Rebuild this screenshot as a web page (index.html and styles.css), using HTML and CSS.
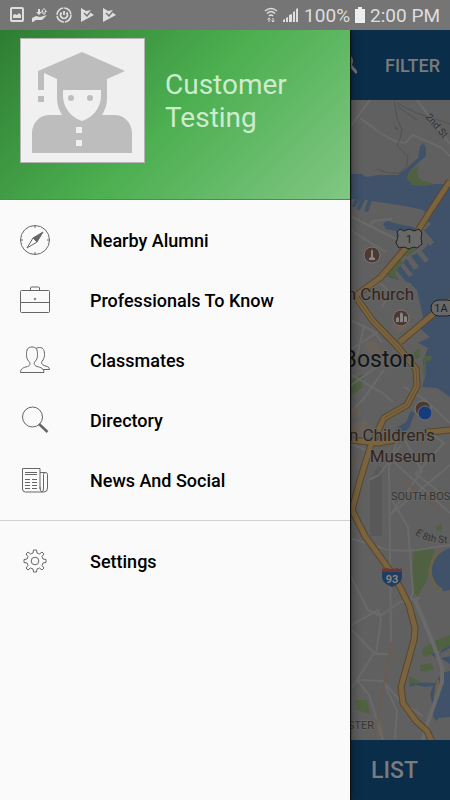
FILE: index.html
```html
<!DOCTYPE html>
<html lang="en">
<head>
    <meta charset="UTF-8">
    <meta name="viewport" content="width=device-width, initial-scale=1.0">
    <title>Nearby Alumni</title>
    <link rel="stylesheet" href="styles.css">
</head>
<body>

<!-- Status Bar -->
<div class="status-bar">
    <div class="status-icons">
        <svg width="14" height="16" viewBox="0 0 14 16"><rect x="1" y="1" width="12" height="13" rx="1" fill="none" stroke="#dedede" stroke-width="2"/><path d="M3 11V8l2-1 2 1 2-2 2 2v3z" fill="#dedede"/></svg>
        <svg width="16" height="16" viewBox="0 0 16 16" fill="#dedede"><path d="M0 11l4-2 4 1 7-2-5 5-6 0-3 2H0zM6 2h2v3h2L7 8 4 5h2z"/><path d="M11 7V4.500H9.500L12 1.500l2.500 3H13V7z" fill="none" stroke="#dedede"/></svg>
        <svg width="16" height="16" viewBox="0 0 16 16" fill="none" stroke="#dedede"><circle cx="8" cy="8" r="7" stroke-width="1.600" stroke-dasharray="10 1"/><path d="M5.500 5.500a3.500 3.500 0 1 0 5 0M8 4v4" stroke-width="1.800"/></svg>
        <svg width="14" height="16" viewBox="0 0 14 16"><path d="M1 1l5 3 5-1v3l3 2L1 15z" fill="#dedede"/><path d="M4 6l3 3 4.500-5.500" fill="none" stroke="#757575" stroke-width="1.500"/></svg>
        <svg width="14" height="16" viewBox="0 0 14 16"><path d="M1 1l5 3 5-1v3l3 2L1 15z" fill="#dedede"/><path d="M4 6l3 3 4.500-5.500" fill="none" stroke="#757575" stroke-width="1.500"/></svg>
    </div>
    <div class="status-info">
        <svg width="14" height="16" viewBox="0 0 14 16" fill="none" stroke="#dedede"><path d="M1 4q6-5 12 0M3 6.500q4-4 8 0M5 9q2-2 4 0" stroke-width="1.400"/><path d="M5 15v-4M3.500 12.500L5 11l1.500 1.500M9 11v4M7.500 13.500L9 15l1.500-1.500"/></svg>
        <svg width="16" height="16" viewBox="0 0 16 16" fill="#dedede"><path d="M0 15v-2l2-1v3zM3 11l2-1v5H3zM6 8l3-1v8H6zM10 5l2-1v11h-2zM13 2l2-1v14h-2z"/></svg>
        <span>100%</span>
        <svg width="10" height="16" viewBox="0 0 10 16" fill="#eeeeee"><path d="M3 0h4v2h3v14H0V2h3z"/></svg>
        <span>2:00 PM</span>
    </div>
</div>

<div class="screen">
    <!-- Map screen behind the drawer -->
    <div class="map-screen">
        <div class="toolbar">
            <button class="search" aria-label="Search">
                <svg width="24" height="24" viewBox="0 0 24 24" fill="none" stroke="#777777" stroke-width="2"><circle cx="13" cy="8" r="6"/><path d="M17 12l7 8" stroke-width="3"/></svg>
            </button>
            <button class="filter">FILTER</button>
        </div>

        <div class="map">
            <svg class="map-art" width="100" height="640" viewBox="350 100 100 640">
                <!-- water -->
                <g fill="#40526a">
                    <path d="M350 174h12l4 3 12-2 20 0 10-8 10-9 2-12 4-3 2 6v7l-9 8-8 8-2 7 6 6 21-1 16 0V397l-13-9-15-1 3-10-2-17 5-12-10-5 12-6-12-10 5-10-6-27-7-7-22-6 20-20 12-5 8-7-6-13 9-8-8-6 9-3-12-6-22-4-26-4-4 11-4-1 4-11-3 0-5 10-4-1 5-10-6 8h-3l3-8H350z"/>
                    <path d="M383 224l4-3 11 3 16 3 2 6-16-1-14-3z"/>
                    <path d="M450 548q-15 5-18 18-2 15 4 22 7 5 14 2zM450 645l-9 5-1 8 10 6zM409 687l7-2 9 2 8-1-3 8 2 9 1 14 3 4 3-3 11-1V671l-8 2-7 10-24-1zM424 650h7l6 5 13-7v8l-12 3z"/>
                    <path d="M411 411l4 2-6 15-5 5-13 3 7-9 8-5zM395 126l4 4-4-1z"/>
                </g>
                <!-- piers -->
                <g fill="#606060">
                    <path d="M388 266l3-3 15 19-3 3zM395 259l3-3 15 19-4 2zM402 252l4-3 13 18-5 3zM409 243l4-3 16 20-4 3zM418 232l4-4 12 14-4 4z"/>
                </g>
                <!-- parks -->
                <g fill="#506142">
                    <path d="M419 165l-9 6-3 7 5 7 10 1 13-2-15-4-3-7z"/>
                    <path d="M382 278l10-16 8-4 3 5-8 9 4 8-9-4zM400 257l13-9 4 1-9 7zM350 380l14-6-2 14-12 8zM414 352l5-4 1 10-6 1zM424 356h8l-1 4-5 1v14l-3-2z"/>
                    <path d="M414 549l13-2 8 3-4 12-4 18-9 16-4-2-2-20zM436 527l6-4v9l-6-2zM423 648l14-8 13-5v11l-12 5-12 6-4-3zM421 665l10-2 3 6-9 3-5-2zM355 700l12 0 3 14-13-4zM409 677l15 6-15 1z"/>
                </g>
                <path d="M441 550q-10 9-11 20 1 15 12 20M438 680l-3 18" fill="none" stroke="#6b6148" stroke-width="3"/>
                <path d="M350 425l17-5 1 14-17 5zM362 342l13-2 12 21-6 8zM350 456l11 6-8 7zM379 720l-3 14 8 3-1-12zM350 408l10-3 2 10-12 3zM390 325l15-7 6 7-13 9z" fill="#69615a"/>
                <path d="M370 480l8-14 4 2v68h-12z" fill="#595959"/>

                <!-- streets -->
                <g fill="none" stroke="#6a6a6a" stroke-width="2">
                    <path d="M350 127l20-27M360 118l23 17 14 7 8 1 8-8 29 13 8 8M417 100l33 44"/>
                    <path d="M350 216l18 9 24 12 20 10M350 230l36 22M369 226l5-5 18-2M365 292l15-9 10 9-8 15M350 320l22 10 10 12M350 350l28-18M350 374l34 20 9 8M364 325l-6 28-8 14M384 370l-20 28-14 15M404 387l20 12 26 24M350 386l28-20M397 440l-7 25"/>
                    <path d="M350 443l45 20 55 50M430 433l14 10-28 31 34 26M450 465l-60 50M402 435l20 36-32 44M369 480l10-5 22-30M389 460l2 182M350 538l38 12 22 1 40-6M389 495l19 32 5 65-3 8"/>
                    <path d="M350 575l18 35 12 6 20-14 20-4M350 626l28-16 3 10-5 34 12 0M350 628l24 25-17 27 26 1 17 20 23 15M383 681l14 30-2 28M357 680l12 15 14 45M350 690l7-10"/>
                </g>
                <path d="M415 600l16 38 11 29v15l-15 43-4 15" fill="none" stroke="#6a6a6a" stroke-width="4"/>
                <path d="M391 642l-10 60-7 36M391 653l16 10M403 480l37 30" fill="none" stroke="#695d51" stroke-width="2"/>
                <path d="M394 100l3 18 5 12-2 9-3 7 11 10-1 9-8 9M377 169l11 4 12 0M397 106l20 14M397 103l20 10 33 11" fill="none" stroke="#525252" stroke-width="1"/>

                <!-- highways -->
                <g fill="none" stroke="#594629" stroke-width="7" stroke-linejoin="round">
                    <path d="M450 181l-21 32-18 29-31 36-25 18 18 25 25 26 18 22 1 17-10 19-23 13-13 27-11 35-8 30 13 26 24 33 12 20 8 16 6 23-1 12-13 47 2 16 13 18 11 10 6 13"/>
                    <path d="M450 300l-50 42M450 430l-20 2-6-1M350 440l28 3 17-3"/>
                </g>
                <g fill="none" stroke="#7a6440" stroke-width="5" stroke-linejoin="round">
                    <path d="M450 181l-21 32-18 29-31 36-25 18 18 25 25 26 18 22 1 17-10 19-23 13-13 27-11 35-8 30 13 26 24 33 12 20 8 16 6 23-1 12-13 47 2 16 13 18 11 10 6 13"/>
                    <path d="M450 300l-50 42M450 430l-20 2-6-1M350 440l28 3 17-3"/>
                </g>
                <path d="M355 296l18 25 25 26 18 22 1 17-10 19-23 13" fill="none" stroke="#655137" stroke-width="1"/>

                <!-- shields and pins -->
                <path d="M400 229l4 2 5-2 5 2 5-2 3 4-1 5 1 6-5 4-4-1-4 2-5-2-5 1-3-5 2-7-1-4z" fill="#686868" stroke="#202020"/>
                <text class="shield-text" x="409" y="243">1</text>
                <rect x="431" y="300" width="24" height="16" rx="8" fill="#686868" stroke="#202020"/>
                <text class="shield-text" x="441" y="312">1A</text>
                <path d="M382 571q10-3 20 0v6q0 6-10 10-10-4-10-10z" fill="#203e60"/>
                <path d="M382 568q3 2 5 0 5 2 10 0 2 2 5 0v4h-20z" fill="#713535"/>
                <text class="shield-text interstate" x="392" y="583">93</text>
                <g stroke="#777777">
                    <circle cx="372" cy="255" r="8" fill="#4c3930"/>
                    <circle cx="401" cy="318" r="8" fill="#4c3930"/>
                    <circle cx="423" cy="409" r="8" fill="#4c3930"/>
                </g>
                <path d="M372 249l1 2 0 6 2 1v2h-6v-2l2-1 0-6zM396 322v-4l2-1 1 1v4zM400 322v-8l1-2 2 2v8zM404 322v-5l1-1 2 1v5z" fill="#858585"/>
                <circle cx="425" cy="413" r="7" fill="#173c7c" stroke="#6e6e6e"/>

                <!-- labels -->
                <text class="place" x="414" y="300">n Church</text>
                <text class="city" x="415" y="367">Boston</text>
                <text class="place" x="435" y="441">Boston Children's</text>
                <text class="place" x="436" y="462">Museum</text>
                <text class="area" x="391" y="500">SOUTH BOS</text>
                <text class="area area-end" x="374" y="729">DORCHESTER</text>
                <text class="street" transform="translate(425 117) rotate(50)">2nd St</text>
                <path id="street-line" d="M415 534q10 9 34 9" fill="none"/>
                <text class="street"><textPath href="#street-line">E 8th St</textPath></text>
            </svg>
        </div>

        <button class="list-button">LIST</button>
    </div>

    <!-- Drawer -->
    <nav class="drawer">
        <div class="profile">
            <svg class="avatar" viewBox="0 0 125 125">
                <path fill="#bdbdbd" d="M18 33L62 14l43 19-18 8v19c0 7-2 12-5 17h13c10 0 17 9 17 18v20H12V95c0-9 7-18 17-18h13c-3-5-5-10-5-17V41l-13-6v17h-6zM18 58h6v6h-6z"/>
                <path fill="#f0f0f0" d="M43 52h38v6c0 12-9 22-19 25-10-3-19-13-19-25zM56 89h6v6h-6zM56 102h6v6h-6z"/>
                <circle cx="51" cy="60" r="3" fill="#bdbdbd"/>
                <circle cx="70" cy="60" r="3" fill="#bdbdbd"/>
            </svg>
            <div class="name">Customer Testing</div>
        </div>

        <div class="menu">
            <a href="#nearby">
                <svg viewBox="0 0 30 30"><circle cx="15" cy="15" r="14.500"/><path d="M15 1v2M15 27v2M1 15h2M27 15h2M7 23l6-10 4 4z"/><path d="M13 13L23 7l-6 10z" fill="#666666"/></svg>
                Nearby Alumni
            </a>
            <a href="#professionals">
                <svg viewBox="0 0 30 30"><rect x="0.500" y="5.500" width="29" height="22" rx="1"/><path d="M10.500 5V3q0-1 1-1h7q1 0 1 1v2M1 17.500h28"/><circle cx="15" cy="14" r="0.800"/></svg>
                Professionals To Know
            </a>
            <a href="#classmates">
                <svg viewBox="0 0 30 30"><path d="M.5 27.500c0-4 3-5 7-6 3-1 3-3 1.500-5-2-2-2.500-4-2.500-7 0-5 1-7.500 5.500-7.500s5.500 2.500 5.500 7.500c0 3-.5 5-2.500 7-1.500 2-1 4 2 5 4 1 7 2 7 6z"/><path d="M16 3.500c1-.7 2-1 3.500-1 4 0 5 3 5 7 0 3-1 5-2.500 7-1 2 0 3 2 4 3 1 5.500 1 5.500 4H23"/></svg>
                Classmates
            </a>
            <a href="#directory">
                <svg viewBox="0 0 30 30"><circle cx="12.500" cy="12" r="10"/><path d="M19 19l8.500 8" stroke-width="2.500"/></svg>
                Directory
            </a>
            <a href="#news">
                <svg viewBox="0 0 30 30"><path d="M20 24V3.500H2.500V24q0 3 3 3H24q3.500 0 3.500-4V9.500q0-2-2-2H20M20 22q0 5 2 5 1.500 0 1.500-4V9.500q0-2 2-2"/><path d="M5 7.500h12M5 9.500h12M5 14.500h5M5 17.500h5M5 20.500h5M5 23.500h5M12 14.500h5M12 17.500h5M12 20.500h5M12 23.500h5"/></svg>
                News And Social
            </a>
        </div>

        <div class="menu">
            <a href="#settings">
                <svg viewBox="0 0 30 30"><circle cx="15" cy="15" r="3.800"/><path d="M13.500 4h3l.5 3 2.500 1 2.500-2 2 2-2 2.500 1 2.500 3 .5v3l-3 .5-1 2.500 2 2.500-2 2-2.500-2-2.500 1-.5 3h-3l-.5-3-2.500-1L8 24l-2-2 2-2.500L7 17l-3-.5v-3l3-.5 1-2.500L6 8l2-2 2.500 2L13 7z"/></svg>
                Settings
            </a>
        </div>
    </nav>
</div>

</body>
</html>
```
FILE: styles.css
```css
* {
    box-sizing: border-box;
}

body {
    font-family: Roboto, Arial, sans-serif;
    margin: 0;
    min-height: 100vh;
    display: flex;
    flex-direction: column;
    background-color: #606060;
}

button {
    font-family: inherit;
    font-weight: 500;
    color: #7b7b7b;
    background-color: transparent;
    border: none;
    padding: 0;
    cursor: pointer;
}

/* Status bar */
.status-bar {
    display: flex;
    justify-content: space-between;
    align-items: center;
    height: 30px;
    padding: 0 10px;
    background-color: #757575;
    color: #dedede;
    font-size: 19px;
}

.status-icons {
    display: flex;
    gap: 8px;
}

.status-info {
    display: flex;
    align-items: center;
    gap: 5px;
}

.screen {
    flex: 1;
    display: flex;
    position: relative;
}

/* Map screen */
.map-screen {
    flex: 1;
    display: flex;
    flex-direction: column;
}

.toolbar {
    display: flex;
    justify-content: flex-end;
    align-items: center;
    gap: 28px;
    height: 70px;
    padding: 0 10px;
    background-color: #0a2d4a;
}

.search svg {
    display: block;
}

.filter {
    font-size: 18px;
}

.map {
    flex: 1;
    display: flex;
    justify-content: flex-end;
    overflow: hidden;
    background-color: #606060;
}

.map-art {
    display: block;
    overflow: visible;
}

.map text {
    font-family: Roboto, Arial, sans-serif;
    paint-order: stroke;
    stroke: #666666;
    stroke-width: 2px;
}

.map .place {
    font-size: 17px;
    fill: #332419;
    text-anchor: end;
}

.map .city {
    font-size: 23px;
    fill: #151515;
    text-anchor: end;
}

.map .area {
    font-size: 11px;
    fill: #38332d;
}

.map .area-end {
    text-anchor: end;
}

.map .street {
    font-size: 10px;
    fill: #303030;
    stroke-width: 1px;
}

.map .shield-text {
    font-size: 11px;
    fill: #202020;
    stroke: none;
    text-anchor: middle;
}

.map .interstate {
    font-weight: 700;
    fill: #858585;
}

.list-button {
    height: 60px;
    padding: 0 32px;
    background-color: #0a2d4a;
    font-size: 23px;
    text-align: right;
}

/* Drawer lies over the map */
.drawer {
    position: absolute;
    top: 0;
    bottom: 0;
    left: 0;
    width: calc(100% - 100px);
    background-color: #fafafa;
    box-shadow: 1px 0 1px #111111, 2px 0 10px rgba(0, 0, 0, 0.4);
    clip-path: inset(0 -12px 0 0);
}

.profile {
    display: flex;
    align-items: center;
    gap: 20px;
    height: 170px;
    padding: 8px 20px 36px;
    background: linear-gradient(135deg, #2e7d32, #4caf50 50%, #81c784);
    border-bottom: 1px solid #2fa136;
}

.avatar {
    flex: none;
    width: 125px;
    height: 125px;
    background-color: #f0f0f0;
    box-shadow: inset 0 0 0 1px #b5b5b5;
}

.name {
    font-size: 28px;
    line-height: 33px;
    color: #cdebce;
}

.menu {
    padding: 10px 0;
}

.menu + .menu {
    border-top: 1px solid #d2d2d2;
}

.menu a {
    display: flex;
    align-items: center;
    gap: 40px;
    height: 60px;
    padding: 0 20px;
    color: #000000;
    font-size: 18px;
    font-weight: 500;
    text-decoration: none;
}

.menu svg {
    width: 30px;
    height: 30px;
    fill: none;
    stroke: #666666;
    stroke-width: 1;
}
```
